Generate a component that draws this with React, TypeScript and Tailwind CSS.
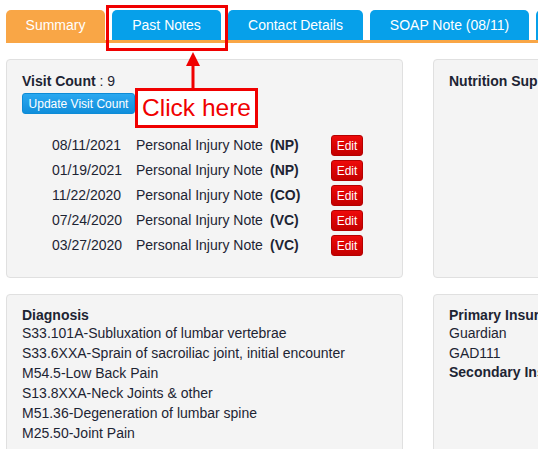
import React from "react";

const rows = [
  { date: "08/11/2021", type: "(NP)" },
  { date: "01/19/2021", type: "(NP)" },
  { date: "11/22/2020", type: "(CO)" },
  { date: "07/24/2020", type: "(VC)" },
  { date: "03/27/2020", type: "(VC)" },
];

const diagnoses = [
  "S33.101A-Subluxation of lumbar vertebrae",
  "S33.6XXA-Sprain of sacroiliac joint, initial encounter",
  "M54.5-Low Back Pain",
  "S13.8XXA-Neck Joints & other",
  "M51.36-Degeneration of lumbar spine",
  "M25.50-Joint Pain",
];

export default function App() {
  return (
    <div
      className="relative w-[538px] h-[449px] overflow-hidden bg-white text-[#1d2433]"
      style={{ fontFamily: '"Liberation Sans", Arial, Helvetica, sans-serif' }}
    >
      {/* Tabs */}
      <div className="pt-[10px] pl-[6px]">
        <div className="flex gap-[7px] text-[14px] text-white whitespace-nowrap">
          <div className="w-[99px] h-[30px] shrink-0 flex items-center justify-center rounded-t-[5px] bg-[#f9a646]">Summary</div>
          <div className="w-[109px] h-[30px] shrink-0 flex items-center justify-center rounded-t-[5px] bg-[#06a0ea]">Past Notes</div>
          <div className="w-[135px] h-[30px] shrink-0 flex items-center justify-center rounded-t-[5px] bg-[#06a0ea]">Contact Details</div>
          <div className="w-[159px] h-[30px] shrink-0 flex items-center justify-center rounded-t-[5px] bg-[#06a0ea]">SOAP Note (08/11)</div>
          <div className="w-[100px] h-[30px] shrink-0 rounded-t-[5px] bg-[#06a0ea]"></div>
        </div>
        <div className="h-[3px] bg-[#f9a646]"></div>
      </div>

      {/* Content */}
      <div className="pt-[16px] pl-[6px] flex flex-col gap-[16px]">
        <div className="flex gap-[30px]">
          <div className="w-[397px] h-[219px] shrink-0 rounded-[4px] border border-[#e0e0e0] bg-[#f4f4f4] pt-[13px] pl-[15px]">
            <div className="text-[14px] leading-[17px]">
              <span className="font-bold">Visit Count</span> : 9
            </div>
            <div className="mt-[3px] w-[113px] h-[21px] flex items-center justify-center rounded-[3px] border border-[#0d8bd6] bg-gradient-to-b from-[#2aa8f0] to-[#0f8edb] text-white text-[12px] whitespace-nowrap">
              Update Visit Count
            </div>
            <div className="mt-[19px] flex flex-col pl-[30px] text-[14px]">
              {rows.map((r, i) => (
                <div key={i} className="h-[25px] flex items-center whitespace-nowrap">
                  <span className="w-[84px]">{r.date}</span>
                  <span className="w-[134px]">Personal Injury Note</span>
                  <span className="w-[61px] font-bold">{r.type}</span>
                  <span className="w-[32px] h-[21px] flex items-center justify-center rounded-[3px] border border-[#b50000] bg-gradient-to-b from-[#ee0a0a] to-[#c40000] text-white text-[12px]">
                    Edit
                  </span>
                </div>
              ))}
            </div>
          </div>
          <div className="w-[397px] h-[219px] shrink-0 rounded-[4px] border border-[#e0e0e0] bg-[#f4f4f4] pt-[13px] pl-[15px]">
            <div className="text-[14px] leading-[17px] font-bold whitespace-nowrap">Nutrition Supplements</div>
          </div>
        </div>

        <div className="flex gap-[30px]">
          <div className="w-[397px] h-[200px] shrink-0 rounded-[4px] border border-[#e0e0e0] bg-[#f4f4f4] pt-[13px] pl-[15px] text-[14px]">
            <div className="font-bold leading-[15px]">Diagnosis</div>
            {diagnoses.map((d, i) => (
              <div key={i} className="leading-[20px] whitespace-nowrap">{d}</div>
            ))}
          </div>
          <div className="w-[397px] h-[200px] shrink-0 rounded-[4px] border border-[#e0e0e0] bg-[#f4f4f4] pt-[13px] pl-[15px] text-[14px] whitespace-nowrap">
            <div className="font-bold leading-[15px]">Primary Insurance</div>
            <div className="leading-[20px]">Guardian</div>
            <div className="leading-[20px]">GAD111</div>
            <div className="font-bold leading-[18px]">Secondary Insurance</div>
          </div>
        </div>
      </div>

      {/* Annotation overlays */}
      <div className="absolute left-[106px] top-[5px] w-[122px] h-[46px] border-[3px] border-[#f00000]"></div>
      <svg className="absolute left-[184px] top-[51px]" width="18" height="38" viewBox="0 0 18 38">
        <polygon points="9,1 16,15 2,15" fill="#f00000" />
        <rect x="7.5" y="14" width="3" height="24" fill="#f00000" />
      </svg>
      <div className="absolute left-[135px] top-[88px] w-[123px] h-[40px] border-[3px] border-[#f00000] bg-white flex items-center justify-center text-[#f00000] text-[24.5px] leading-none whitespace-nowrap">
        Click here
      </div>
    </div>
  );
}
